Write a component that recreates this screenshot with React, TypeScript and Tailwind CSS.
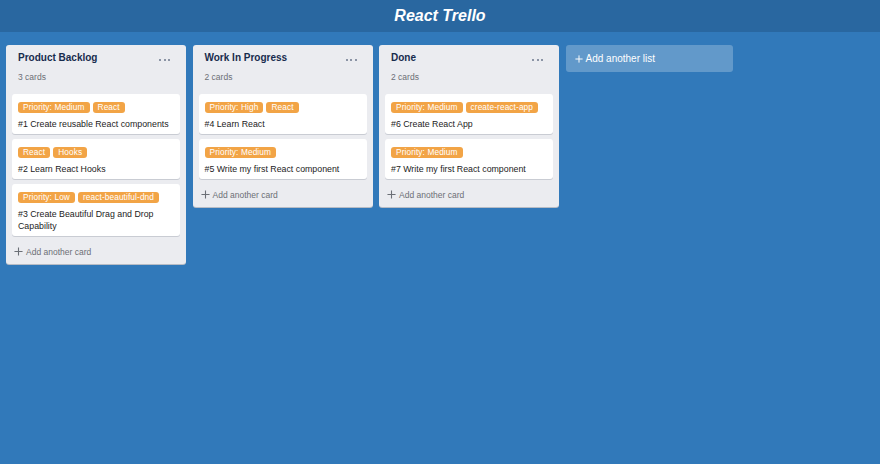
type Card = { id: number; title: string; tags: string[] };
type List = { title: string; cards: Card[] };

const lists: List[] = [
  {
    title: "Product Backlog",
    cards: [
      { id: 1, title: "#1 Create reusable React components", tags: ["Priority: Medium", "React"] },
      { id: 2, title: "#2 Learn React Hooks", tags: ["React", "Hooks"] },
      { id: 3, title: "#3 Create Beautiful Drag and Drop Capability", tags: ["Priority: Low", "react-beautiful-dnd"] },
    ],
  },
  {
    title: "Work In Progress",
    cards: [
      { id: 4, title: "#4 Learn React", tags: ["Priority: High", "React"] },
      { id: 5, title: "#5 Write my first React component", tags: ["Priority: Medium"] },
    ],
  },
  {
    title: "Done",
    cards: [
      { id: 6, title: "#6 Create React App", tags: ["Priority: Medium", "create-react-app"] },
      { id: 7, title: "#7 Write my first React component", tags: ["Priority: Medium"] },
    ],
  },
];

function Plus({ className }: { className: string }) {
  return (
    <svg className={className} viewBox="0 0 10 10" fill="none" stroke="currentColor" strokeWidth="1.2">
      <path d="M5 0.5v9M0.5 5h9" />
    </svg>
  );
}

function Lane({ list }: { list: List }) {
  return (
    <div className="w-[180px] shrink-0 rounded-[3px] bg-[#ebecf0] px-[6px] pb-[2px] shadow-[0_1px_0_#b7bcc5]">
      <div className="flex items-center justify-between px-[6px] pt-[7px]">
        <h2 className="text-[10px] font-bold leading-[12px] text-[#172b4d]">{list.title}</h2>
        <div className="mt-[3px] flex gap-[2.5px] pr-[4px]">
          <span className="h-[2px] w-[2px] rounded-full bg-[#6b778c]" />
          <span className="h-[2px] w-[2px] rounded-full bg-[#6b778c]" />
          <span className="h-[2px] w-[2px] rounded-full bg-[#6b778c]" />
        </div>
      </div>
      <div className="px-[6px] pt-[8px] pb-[12px] text-[8.5px] leading-[10px] text-[#6b6f76]">
        {list.cards.length} cards
      </div>
      <div className="flex flex-col gap-[5.5px]">
        {list.cards.map((c) => (
          <div key={c.id} className="rounded-[3px] bg-white px-[6px] pt-[7.5px] pb-[4px] shadow-[0_1px_0_#c9ccd3]">
            <div className="flex flex-wrap gap-[3px]">
              {c.tags.map((t) => (
                <span
                  key={t}
                  className="h-[11px] rounded-[3px] bg-[#f2a446] px-[5px] text-[8.3px] leading-[11px] tracking-[0.1px] text-white"
                >
                  {t}
                </span>
              ))}
            </div>
            <p className="mt-[5px] text-[8.8px] leading-[12px] text-[#1c1c1c]">{c.title}</p>
          </div>
        ))}
      </div>
      <div className="flex items-center gap-[3px] px-[2px] pt-[11px] pb-[5px] text-[8.5px] leading-[10px] text-[#6b6f76]">
        <Plus className="h-[9px] w-[9px]" />
        <span>Add another card</span>
      </div>
    </div>
  );
}

export default function App() {
  return (
    <div className="min-h-screen bg-[#3179ba] font-['Liberation_Sans',Arial,sans-serif]">
      <header className="flex h-[32px] items-center justify-center bg-[#2967a0]">
        <h1 className="text-[16px] font-bold italic text-white">React Trello</h1>
      </header>
      <div className="flex items-start gap-[6.5px] px-[6px] pt-[13px]">
        {lists.map((l) => (
          <Lane key={l.title} list={l} />
        ))}
        <div className="flex h-[27px] w-[167px] shrink-0 items-center gap-[3px] rounded-[3px] bg-[#ffffff3d] pl-[9px] text-[10px] text-white">
          <Plus className="h-[8px] w-[8px]" />
          <span>Add another list</span>
        </div>
      </div>
    </div>
  );
}
